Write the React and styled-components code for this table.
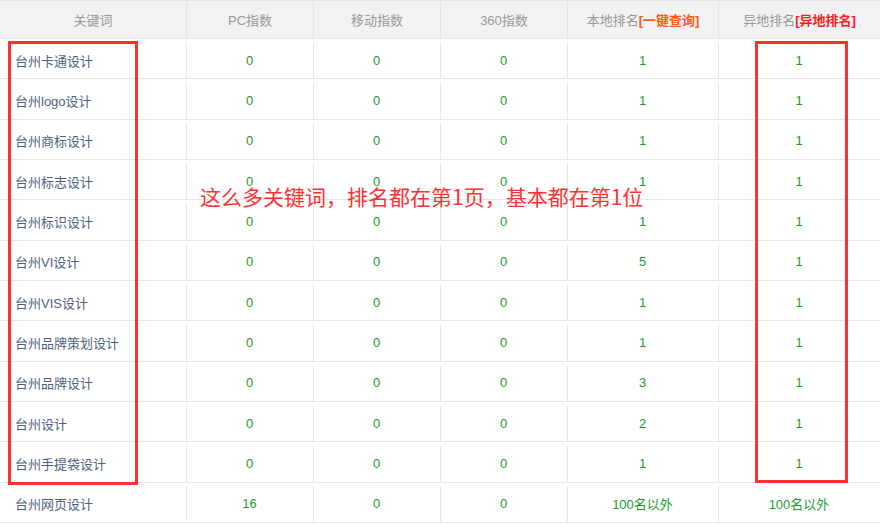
import React from "react";
import styled, { createGlobalStyle } from "styled-components";

const GlobalStyle = createGlobalStyle`
    body {
        margin: 0;
        background: #fff;
        font-family: "Liberation Sans", "Noto Sans CJK SC", sans-serif;
    }
`;

const Wrapper = styled.div`
    position: relative;
    width: 880px;
    height: 525px;
    overflow: hidden;
    background: #fff;
`;

const Grid = styled.div`
    display: grid;
    grid-template-columns: 186px 127px 127px 127px 151px 162px;
    grid-template-rows: 38px repeat(12, 40.33px);
    border-top: 1px solid #e2e6ec;
`;

const HeadCell = styled.div`
    display: flex;
    align-items: center;
    justify-content: center;
    background: #f2f2f2;
    color: #999;
    font-size: 13px;
    border-left: ${(p) => (p.$first ? "none" : "1px solid #e4e4e4")};
    border-bottom: 1px solid #e6e6e6;
    white-space: nowrap;
`;

const Link = styled.span`
    color: ${(p) => p.$color};
    font-weight: bold;
`;

const Cell = styled.div`
    position: relative;
    display: flex;
    align-items: center;
    justify-content: ${(p) => (p.$left ? "flex-start" : "center")};
    padding-left: ${(p) => (p.$left ? "15px" : "0")};
    padding-top: 3px;
    color: ${(p) => (p.$left ? "#4f5f82" : "#1e9a2c")};
    font-size: 13px;
    border-bottom: 1px solid #e8e8e8;
    white-space: nowrap;

    &::before {
        content: "";
        display: ${(p) => (p.$left ? "none" : "block")};
        position: absolute;
        left: 0;
        top: 3px;
        bottom: 0;
        width: 1px;
        background: #e8e8e8;
    }
`;

const RedBox = styled.div`
    position: absolute;
    border: 3px solid #ff3030;
    box-sizing: border-box;
    left: ${(p) => p.$x}px;
    top: ${(p) => p.$y}px;
    width: ${(p) => p.$w}px;
    height: ${(p) => p.$h}px;
`;

const Note = styled.div`
    position: absolute;
    left: 200px;
    top: 182px;
    font-size: 21px;
    color: #ff3030;
    font-family: "Noto Sans CJK SC", sans-serif;
    line-height: 28px;
    white-space: nowrap;
`;

const rows = [
    ["台州卡通设计", "0", "0", "0", "1", "1"],
    ["台州logo设计", "0", "0", "0", "1", "1"],
    ["台州商标设计", "0", "0", "0", "1", "1"],
    ["台州标志设计", "0", "0", "0", "1", "1"],
    ["台州标识设计", "0", "0", "0", "1", "1"],
    ["台州VI设计", "0", "0", "0", "5", "1"],
    ["台州VIS设计", "0", "0", "0", "1", "1"],
    ["台州品牌策划设计", "0", "0", "0", "1", "1"],
    ["台州品牌设计", "0", "0", "0", "3", "1"],
    ["台州设计", "0", "0", "0", "2", "1"],
    ["台州手提袋设计", "0", "0", "0", "1", "1"],
    ["台州网页设计", "16", "0", "0", "100名以外", "100名以外"],
];

function App() {
    return (
        <Wrapper>
            <GlobalStyle />
            <Grid>
                <HeadCell $first>关键词</HeadCell>
                <HeadCell>PC指数</HeadCell>
                <HeadCell>移动指数</HeadCell>
                <HeadCell>360指数</HeadCell>
                <HeadCell>
                    本地排名<Link $color="#ff5a0a">[一键查询]</Link>
                </HeadCell>
                <HeadCell>
                    异地排名<Link $color="#ff1a1a">[异地排名]</Link>
                </HeadCell>
                {rows.map((row) =>
                    row.map((val, i) => (
                        <Cell key={row[0] + i} $left={i === 0}>
                            {val}
                        </Cell>
                    ))
                )}
            </Grid>
            <RedBox $x={8} $y={41} $w={130} $h={444} />
            <RedBox $x={755} $y={41} $w={93} $h={442} />
            <Note>这么多关键词，排名都在第1页，基本都在第1位</Note>
        </Wrapper>
    );
}

export default App;
